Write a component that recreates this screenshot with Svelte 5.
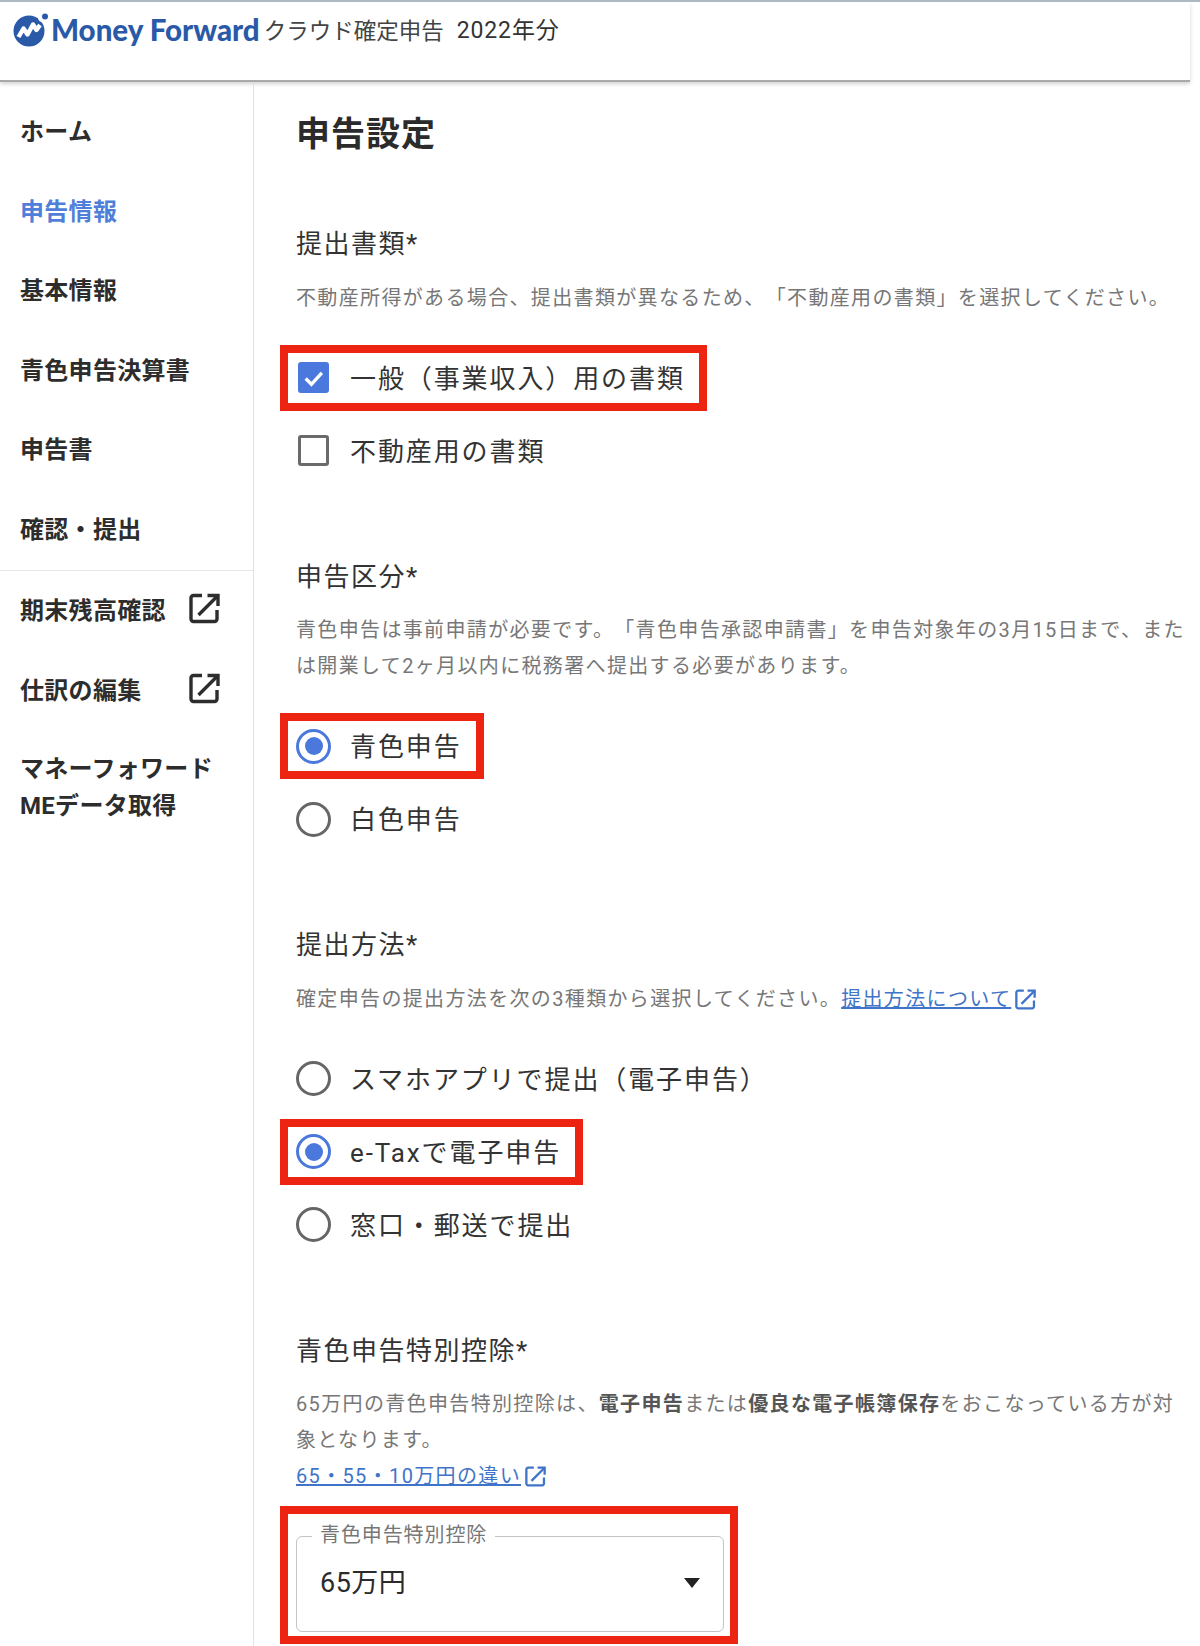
<script>
    const navTop = [
        { label: "ホーム" },
        { label: "申告情報", active: true },
        { label: "基本情報" },
        { label: "青色申告決算書" },
        { label: "申告書" },
        { label: "確認・提出" },
    ];
    const navBottom = ["期末残高確認", "仕訳の編集"];

    const filingMethods = [
        { label: "スマホアプリで提出（電子申告）" },
        { label: "e-Taxで電子申告", checked: true, marked: true },
        { label: "窓口・郵送で提出" },
    ];
    const declareTypes = [
        { label: "青色申告", checked: true, marked: true },
        { label: "白色申告" },
    ];
</script>

{#snippet extIcon(cls)}
    <svg class={cls} viewBox="0 0 31 31" fill="none" stroke="currentColor" stroke-width="3.4" aria-hidden="true">
        <path d="M13 2.500H4.500a2.500 2.500 0 0 0-2.500 2.500v21a2.500 2.500 0 0 0 2.500 2.500h21a2.500 2.500 0 0 0 2.500-2.500V17" />
        <path d="M18.500 2.500H29V13" stroke-linecap="butt" />
        <path d="M29 2.500 9.500 22" />
    </svg>
{/snippet}

{#snippet radio(item)}
    <div class="opt" class:marked={item.marked}>
        <span class="radio" class:on={item.checked}></span>
        <span class="opt-text">{item.label}</span>
    </div>
{/snippet}

<div class="page">
    <header class="header">
        <svg class="logo" viewBox="0 0 38 36" aria-hidden="true">
            <circle cx="16" cy="19" r="15.500" fill="#2a5aa7" />
            <circle cx="30" cy="5.500" r="5" fill="#fff" />
            <circle cx="32" cy="4.500" r="3" fill="#2a5aa7" />
            <path d="M5.500 25 10.500 16.500 14.500 22.500 20 12.500 23.500 18 27 13" fill="none" stroke="#fff" stroke-width="4.400" stroke-linejoin="round" />
        </svg>
        <span class="brand">Money Forward</span>
        <span class="product">クラウド確定申告</span>
        <span class="year">2022年分</span>
    </header>

    <div class="body">
        <nav class="side">
            <ul class="nav-top">
                {#each navTop as item}
                    <li class:active={item.active}>{item.label}</li>
                {/each}
            </ul>
            <ul class="nav-bottom">
                {#each navBottom as label}
                    <li>{label}{@render extIcon("nav-ext")}</li>
                {/each}
                <li class="two-line">マネーフォワード<br />MEデータ取得</li>
            </ul>
        </nav>

        <main class="main">
            <h1>申告設定</h1>

            <section>
                <h2>提出書類*</h2>
                <p class="desc">不動産所得がある場合、提出書類が異なるため、「不動産用の書類」を選択してください。</p>
                <div class="opts">
                    <div class="opt marked">
                        <span class="check on">
                            <svg viewBox="0 0 24 24" width="28" height="28"><path d="M4.500 12.500 10 18 20 7" fill="none" stroke="#fff" stroke-width="3.200" /></svg>
                        </span>
                        <span class="opt-text">一般（事業収入）用の書類</span>
                    </div>
                    <div class="opt">
                        <span class="check"></span>
                        <span class="opt-text">不動産用の書類</span>
                    </div>
                </div>
            </section>

            <section>
                <h2>申告区分*</h2>
                <p class="desc">青色申告は事前申請が必要です。「青色申告承認申請書」を申告対象年の3月15日まで、また<br />は開業して2ヶ月以内に税務署へ提出する必要があります。</p>
                <div class="opts">
                    {#each declareTypes as item}
                        {@render radio(item)}
                    {/each}
                </div>
            </section>

            <section>
                <h2>提出方法*</h2>
                <p class="desc">確定申告の提出方法を次の3種類から選択してください。<a href="#top">提出方法について</a>{@render extIcon("link-ext")}</p>
                <div class="opts">
                    {#each filingMethods as item}
                        {@render radio(item)}
                    {/each}
                </div>
            </section>

            <section>
                <h2>青色申告特別控除*</h2>
                <p class="desc">65万円の青色申告特別控除は、<b>電子申告</b>または<b>優良な電子帳簿保存</b>をおこなっている方が対<br />象となります。</p>
                <p class="desc"><a href="#top">65・55・10万円の違い</a>{@render extIcon("link-ext")}</p>
                <div class="select-wrap">
                    <div class="select">
                        <span class="select-label">青色申告特別控除</span>
                        <span class="select-value">65万円</span>
                        <span class="arrow"></span>
                    </div>
                </div>
            </section>
        </main>
    </div>
</div>

<style>
    :global(body) {
        margin: 0;
        background: #fff;
    }
    .page {
        width: 1200px;
        height: 1646px;
        overflow: hidden;
        background: #fff;
        font-family: Roboto, "Noto Sans CJK JP", sans-serif;
        color: #333;
        border-top: 2px solid #aeb8c0;
        box-sizing: border-box;
        text-spacing-trim: space-all;
    }
    .header {
        width: 1190px;
        height: 80px;
        box-sizing: border-box;
        border-bottom: 2px solid #a9a9a9;
        box-shadow: 0 2px 4px rgba(0, 0, 0, 0.18);
        display: flex;
        align-items: flex-start;
        padding: 10px 0 0 13px;
    }
    .logo {
        width: 38px;
        height: 36px;
        flex: none;
    }
    .brand {
        font-family: Lato, sans-serif;
        font-weight: 900;
        font-size: 29.500px;
        line-height: 36px;
        color: #2a5aa7;
        white-space: nowrap;
    }
    .product {
        font-size: 22.500px;
        line-height: 36px;
        margin-left: 4px;
        margin-top: 1px;
        color: #444;
        white-space: nowrap;
    }
    .year {
        font-size: 23px;
        line-height: 36px;
        margin-left: 13px;
        margin-top: 1px;
        letter-spacing: 0.900px;
        color: #333;
    }

    .body {
        display: flex;
        height: 1564px;
    }
    .side {
        width: 254px;
        flex: none;
        box-sizing: border-box;
        border-right: 1px solid #e2e2e2;
        padding-top: 8px;
    }
    ul {
        list-style: none;
        margin: 0;
        padding: 0;
    }
    li {
        height: 79.500px;
        display: flex;
        align-items: center;
        padding-left: 20px;
        box-sizing: border-box;
        font-size: 24px;
        font-weight: 700;
        color: #2d2d2d;
        letter-spacing: 0.300px;
    }
    li.active {
        color: #4f7fd9;
    }
    .nav-top {
        padding-bottom: 3px;
        border-bottom: 1px solid #e6e6e6;
    }
    .nav-bottom {
        margin-top: -2px;
    }
    .nav-bottom li.two-line {
        line-height: 37px;
        display: block;
        height: auto;
        padding-top: 23px;
    }
    :global(.nav-ext) {
        width: 31px;
        height: 31px;
        margin-left: auto;
        margin-right: 33px;
    }

    .main {
        flex: 1;
        padding: 30px 0 0 296px;
        margin-left: -254px;
        min-width: 0;
    }
    h1 {
        margin: 0;
        font-size: 34px;
        line-height: 44px;
        font-weight: 700;
        color: #2b2b2b;
        letter-spacing: 1px;
    }
    section {
        margin-top: 81px;
    }
    h1 + section {
        margin-top: 68px;
    }
    h2 {
        margin: 0 0 15.500px;
        font-size: 26px;
        line-height: 40px;
        font-weight: 400;
        letter-spacing: 1.500px;
        color: #333;
    }
    .desc {
        margin: 0;
        width: 900px;
        font-size: 20px;
        line-height: 36px;
        letter-spacing: 1.350px;
        color: #777;
    }
    .desc b {
        color: #555;
        font-weight: 700;
    }
    a {
        color: #3f74c8;
        text-decoration: underline;
    }
    :global(.link-ext) {
        width: 21px;
        height: 21px;
        color: #3f74c8;
        margin-left: 4px;
        vertical-align: -4px;
    }

    .opts {
        margin-top: 37px;
        display: flex;
        flex-direction: column;
        align-items: flex-start;
        gap: 23px;
        margin-left: -8px;
    }
    .opt {
        height: 50px;
        display: flex;
        align-items: center;
        gap: 19px;
        padding: 0 14px 0 8px;
        font-size: 26px;
        letter-spacing: 1.900px;
        color: #333;
        white-space: nowrap;
    }
    .opt-text {
        margin-top: -3px;
    }
    .opt.marked {
        outline: 8px solid #ee2412;
    }
    .radio {
        width: 35px;
        height: 35px;
        box-sizing: border-box;
        border: 3.500px solid #666;
        border-radius: 50%;
        display: flex;
        align-items: center;
        justify-content: center;
        flex: none;
    }
    .radio.on {
        border-color: #4a78dc;
    }
    .radio.on::after {
        content: "";
        width: 18px;
        height: 18px;
        border-radius: 50%;
        background: #4a78dc;
    }
    .check {
        width: 31px;
        height: 31px;
        margin: 0 2px;
        box-sizing: border-box;
        border: 3.500px solid #6a6a6a;
        border-radius: 3px;
        display: flex;
        align-items: center;
        justify-content: center;
        flex: none;
    }
    .check.on {
        background: #4a78dc;
        border-color: #4a78dc;
    }

    .select-wrap {
        width: 442px;
        box-sizing: border-box;
        margin: 20px 0 0 -8px;
        padding: 22px 6px 4px 8px;
        outline: 8px solid #ee2412;
    }
    .select {
        position: relative;
        height: 96px;
        box-sizing: border-box;
        border: 1.500px solid #c4c4c4;
        border-radius: 6px;
        display: flex;
        align-items: center;
        justify-content: space-between;
        padding: 0 23px 0 23px;
    }
    .select-label {
        position: absolute;
        left: 15px;
        top: -14px;
        padding: 0 8px;
        background: #fff;
        font-size: 20px;
        line-height: 24px;
        letter-spacing: 0.900px;
        color: #777;
    }
    .select-value {
        font-size: 27px;
        line-height: 36px;
        color: #2b2b2b;
        margin-top: -3px;
        letter-spacing: 0.500px;
    }
    .arrow {
        width: 0;
        height: 0;
        border-left: 8.500px solid transparent;
        border-right: 8.500px solid transparent;
        border-top: 10px solid #222;
        margin-top: -2px;
    }
</style>
